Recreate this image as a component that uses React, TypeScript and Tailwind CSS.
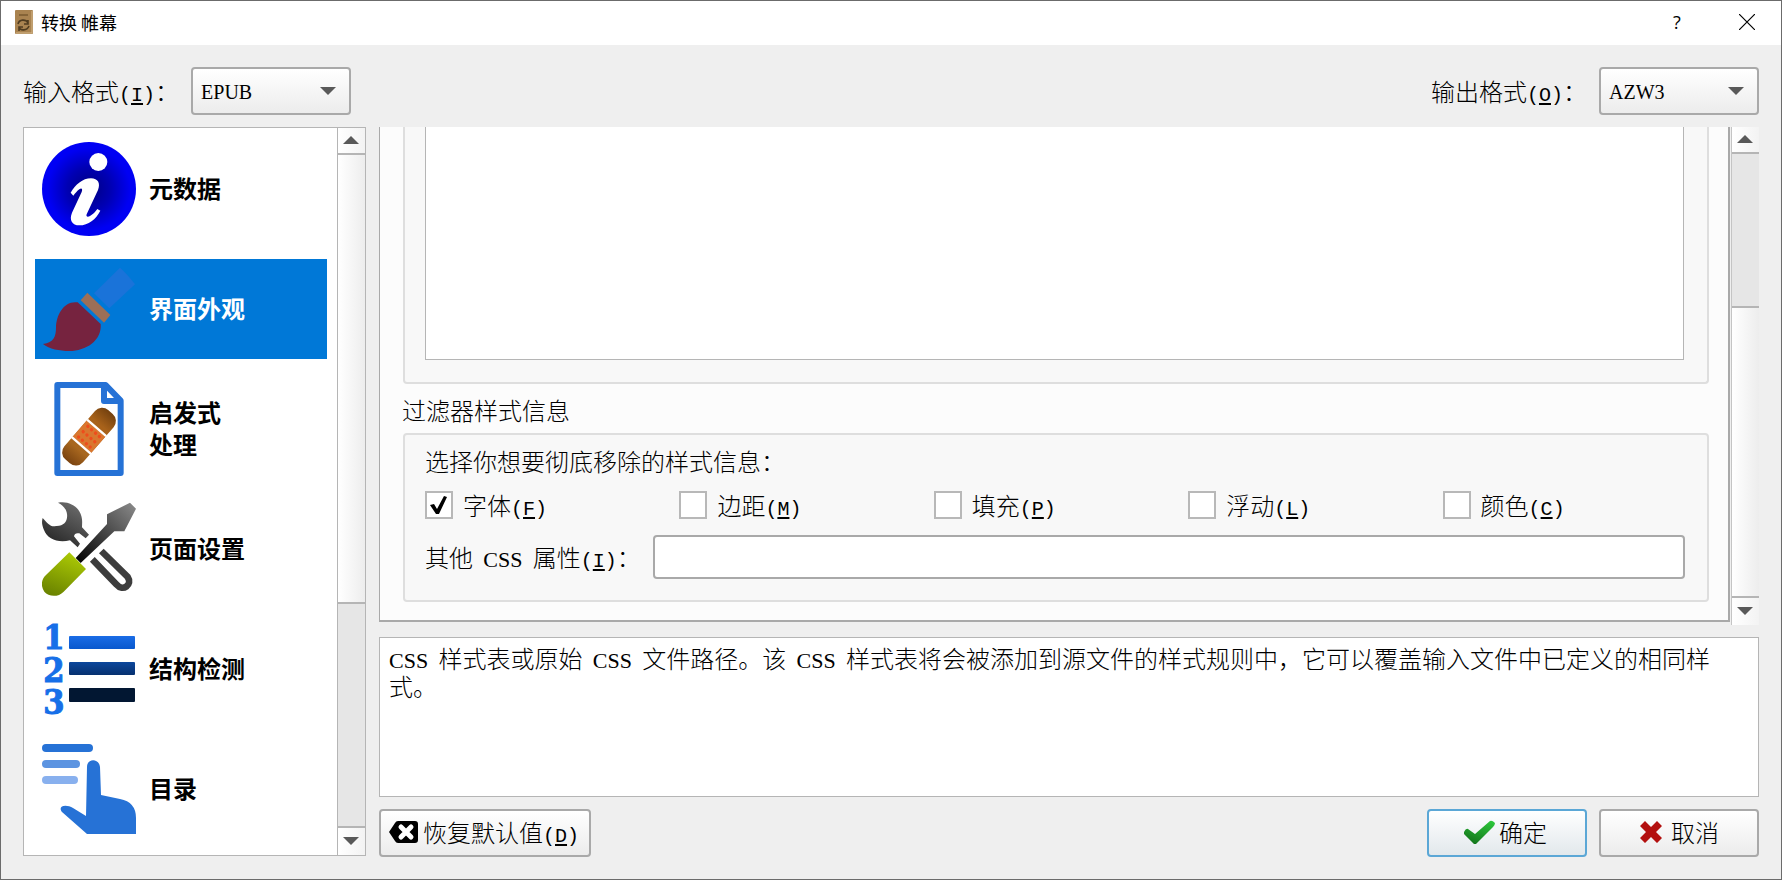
import { useState } from 'react'
import type { ReactNode } from 'react'
import { clsx } from 'clsx'

interface Section {
  id: string
  lines: string[]
  icon: ReactNode
}

interface FilterOption {
  id: string
  label: string
  mnemonic: string
}

const FILTERS: FilterOption[] = [
  { id: 'fonts',   label: '字体', mnemonic: 'F' },
  { id: 'margins', label: '边距', mnemonic: 'M' },
  { id: 'padding', label: '填充', mnemonic: 'P' },
  { id: 'floats',  label: '浮动', mnemonic: 'L' },
  { id: 'colors',  label: '颜色', mnemonic: 'C' },
]

/* ---------- icons ---------- */

function InfoIcon() {
  return (
    <svg viewBox="0 0 282 282" className="size-[94px] shrink-0">
      <defs>
        <radialGradient id="info-bg" cx="0.5" cy="0.5" r="0.52">
          <stop offset="0" stopColor="#000080" />
          <stop offset="0.45" stopColor="#0000b4" />
          <stop offset="0.85" stopColor="#0000f4" />
        </radialGradient>
      </defs>
      <circle cx="141" cy="141" r="141" fill="url(#info-bg)" />
      <circle cx="169" cy="60" r="27" fill="#fff" />
      <path
        d="M86 152C100 128 122 109 147 109C168 109 176 124 168 144L134 217C131 225 138 226 144 222C153 217 160 210 166 201L175 206C162 232 139 250 112 250C90 250 81 234 90 212L119 150C123 140 118 137 112 142C105 147 100 154 94 161Z"
        fill="#fff"
      />
    </svg>
  )
}

function BrushIcon() {
  return (
    <svg viewBox="0 0 282 282" className="size-[94px] shrink-0">
      <path d="M234 17Q256 36 279 67L202 139L156 94Z" fill="#1a73d9" />
      <path d="M136 92L205 159L186 182L116 115Z" fill="#9c6f57" />
      <path
        d="M107 121Q140 152 176 186C180 236 132 267 82 267C52 267 22 261 3 246C36 242 42 224 42 196C43 158 66 115 107 121Z"
        fill="#76233f"
      />
    </svg>
  )
}

function HeuristicIcon() {
  return (
    <svg viewBox="0 0 282 282" className="size-[94px] shrink-0">
      <defs>
        <linearGradient id="plaster" x1="0" x2="1">
          <stop offset="0" stopColor="#7a4310" />
          <stop offset="0.25" stopColor="#a8671f" />
          <stop offset="0.75" stopColor="#a8621a" />
          <stop offset="1" stopColor="#74410f" />
        </linearGradient>
      </defs>
      <path
        d="M46 9H191L236 56V273H46Z M186 12V57H234"
        fill="none"
        stroke="#2672d6"
        strokeWidth="18"
        strokeLinejoin="round"
      />
      <g transform="translate(141 164) rotate(-49)">
        <rect x="-98" y="-37" width="196" height="74" rx="28" fill="url(#plaster)" />
        <rect x="-35" y="-37" width="70" height="74" fill="#d9772f" />
        <path d="M-35 -38V38M35 -38V38" stroke="#fff" strokeWidth="7" />
        {[-21, 0, 21].map((x) =>
          [-23, -8, 8, 23].map((y) => <circle key={`${x}${y}`} cx={x} cy={y} r="5" fill="#ee4d1c" />)
        )}
      </g>
    </svg>
  )
}

function ToolsIcon() {
  return (
    <svg viewBox="0 0 282 282" className="size-[94px] shrink-0">
      <defs>
        <linearGradient id="wrench" x1="0" y1="1" x2="0.6" y2="0">
          <stop offset="0" stopColor="#1c1c1c" />
          <stop offset="1" stopColor="#686868" />
        </linearGradient>
        <linearGradient id="blade" x1="0" y1="1" x2="1" y2="0">
          <stop offset="0" stopColor="#000" />
          <stop offset="1" stopColor="#8c8c8c" />
        </linearGradient>
        <linearGradient id="grip" x1="0.7" y1="0" x2="0.3" y2="1">
          <stop offset="0" stopColor="#adcb05" />
          <stop offset="1" stopColor="#6b8400" />
        </linearGradient>
      </defs>
      <path
        d="M48 2C80 -5 111 14 118 42C122 56 120 66 120 76L141 98L131 109L112 94Q98 91 96 103L114 125L107 136L84 115C48 124 16 111 6 84C-1 68 -1 58 2 48C15 63 27 77 42 72C66 73 78 57 75 36C73 20 61 8 48 2Z"
        fill="url(#wrench)"
      />
      <path d="M151 172L224 248C242 270 273 248 257 225L178 147" fill="none" stroke="#3d3d3d" strokeWidth="20" />
      <path d="M264 2L282 20L247 88H217L116 183L101 168L195 66V37Z" fill="url(#blade)" />
      <path d="M82 151L132 201L65 269C48 287 19 284 7 269C-5 252 -2 232 12 219Z" fill="url(#grip)" />
    </svg>
  )
}

function StructureIcon() {
  return (
    <svg viewBox="0 0 94 94" className="size-[94px] shrink-0 overflow-visible">
      <defs>
        <linearGradient id="bar-top" x2="0" y2="1">
          <stop offset="0" stopColor="#1a6ce6" />
          <stop offset="1" stopColor="#0858cd" />
        </linearGradient>
        <linearGradient id="bar-mid" x2="0" y2="1">
          <stop offset="0" stopColor="#0c479c" />
          <stop offset="1" stopColor="#06306f" />
        </linearGradient>
      </defs>
      <g
        className="font-['DejaVu_Serif_Condensed','DejaVu_Serif',serif] text-[34px] font-bold"
        fill="#166fe8"
        stroke="#166fe8"
        strokeWidth="1"
        textAnchor="middle"
      >
        <text x="12" y="27">1</text>
        <text x="12" y="60">2</text>
        <text x="12" y="92">3</text>
      </g>
      <rect x="27" y="14" width="66" height="13" rx="1" fill="url(#bar-top)" />
      <rect x="27" y="40" width="66" height="13" rx="1" fill="url(#bar-mid)" />
      <rect x="27" y="66" width="66" height="14" rx="1" fill="#021732" />
    </svg>
  )
}

function TocIcon() {
  return (
    <svg viewBox="0 0 94 94" className="size-[94px] shrink-0">
      <rect y="2" width="51" height="8" rx="4" fill="#2672d6" />
      <rect y="18" width="38" height="8" rx="4" fill="#5c94e1" />
      <rect y="34" width="36" height="8" rx="4" fill="#88b0ee" />
      <path
        d="M45 25C45 16 57 16 58 25L59 53L78 57Q94 60 94 76V92H45L20 70C15 63 25 62 31 66L44 74Z"
        fill="#2672d6"
      />
    </svg>
  )
}

function BookIcon() {
  return (
    <svg viewBox="0 0 18 24" className="h-6 w-[18px]">
      <rect width="18" height="24" rx="1" fill="#a98350" />
      <path d="M17 1V23H1" fill="none" stroke="#d6b98d" strokeWidth="1" />
      <path d="M4 5H13" stroke="#60451f" strokeWidth="1" />
      <path
        d="M3 14C4 9 11 9 13 13M13 10V14H9M14 16C12 21 5 21 4 17M4 21V17H8"
        fill="none"
        stroke="#4f3b1f"
        strokeWidth="1.6"
      />
    </svg>
  )
}

function ClearIcon() {
  return (
    <svg viewBox="0 0 30 24" className="h-6 w-[30px]">
      <path d="M9 1H26Q29 1 29 4V20Q29 23 26 23H9Q7 23 6 21L0 12L6 3Q7 1 9 1Z" fill="#000" />
      <path d="M12 7L22 17M22 7L12 17" stroke="#fff" strokeWidth="5" strokeLinecap="round" />
    </svg>
  )
}

function OkIcon() {
  return (
    <svg viewBox="0 0 32 24" className="h-6 w-8">
      <defs>
        <linearGradient id="ok" x1="0.3" y1="1" x2="0.8" y2="0">
          <stop offset="0" stopColor="#13751b" />
          <stop offset="1" stopColor="#2dc53b" />
        </linearGradient>
      </defs>
      <path d="M1 12Q3 8 5 9L12 14L27 1Q29 0 32 3Q32 5 30 7L13 24H11L1 14Z" fill="url(#ok)" />
    </svg>
  )
}

function CancelIcon() {
  return (
    <svg viewBox="0 0 24 24" className="size-6">
      <path d="M6 1L12 7L18 1L23 6L17 12L23 18L18 23L12 17L6 23L1 18L7 12L1 6Z" fill="#b3100f" />
    </svg>
  )
}

function Triangle({ up }: { up?: boolean }) {
  return (
    <svg viewBox="0 0 16 8" className="h-2 w-4">
      <path d={up ? 'M0 8H16L8 0Z' : 'M0 0H16L8 8Z'} fill="#595959" />
    </svg>
  )
}

/* ---------- small parts ---------- */

function Mnemonic({ letter }: { letter: string }) {
  return (
    <span className="font-['Liberation_Mono',monospace] text-xl leading-4">
      (<span className="underline decoration-2 underline-offset-2">{letter}</span>)
    </span>
  )
}

function Css() {
  return <span className="mx-[5px] font-['Liberation_Serif',serif] text-[22px] leading-4 first:ml-0">CSS</span>
}

function FormatSelect({ id, value }: { id: string; value: string }) {
  return (
    <div className="relative">
      <select
        id={id}
        defaultValue={value}
        className="h-12 w-40 appearance-none rounded border-2 border-[#a9a9a9] bg-linear-to-b from-white to-[#ececec] pt-0.5 pl-2 font-['Liberation_Serif',serif] text-xl"
      >
        <option>{value}</option>
      </select>
      <span className="pointer-events-none absolute inset-y-0 right-[15px] flex items-center">
        <Triangle />
      </span>
    </div>
  )
}

function ScrollButton({ up, label }: { up?: boolean; label: string }) {
  return (
    <button
      aria-label={label}
      className={clsx(
        'flex shrink-0 items-center justify-center bg-linear-to-r from-white to-[#f3f3f3] pr-0.5 pb-0.5',
        up ? 'h-[27px] border-b-2 border-[#b5b5b5]' : 'h-[29px] border-t-2 border-[#b5b5b5]'
      )}
    >
      <Triangle up={up} />
    </button>
  )
}

const SECTIONS: Section[] = [
  { id: 'metadata',   lines: ['元数据'],         icon: <InfoIcon /> },
  { id: 'look',       lines: ['界面外观'],       icon: <BrushIcon /> },
  { id: 'heuristics', lines: ['启发式', '处理'], icon: <HeuristicIcon /> },
  { id: 'page',       lines: ['页面设置'],       icon: <ToolsIcon /> },
  { id: 'structure',  lines: ['结构检测'],       icon: <StructureIcon /> },
  { id: 'toc',        lines: ['目录'],           icon: <TocIcon /> },
]

/* ---------- panels ---------- */

function TitleBar() {
  return (
    <header className="flex h-11 shrink-0 items-center bg-white pb-0.5 pl-[14px]">
      <BookIcon />
      <h1 className="ml-2 flex-1 text-lg leading-6">转换 帷幕</h1>
      <button aria-label="帮助" className="mr-[52px] w-5 text-center font-['Open_Sans',sans-serif] text-lg">?</button>
      <button aria-label="关闭" className="mr-[26px]">
        <svg viewBox="0 0 16 16" className="size-4">
          <path d="M0 0L16 16M16 0L0 16" stroke="#000" strokeWidth="1.2" />
        </svg>
      </button>
    </header>
  )
}

function Sidebar() {
  const [active, setActive] = useState('look')

  return (
    <aside className="mb-px flex w-[343px] shrink-0 border border-[#b5b5b5] bg-white">
      <nav className="flex flex-1 flex-col gap-5 pt-[11px] pr-2.5 pl-[11px]">
        {SECTIONS.map((section) => (
          <button
            key={section.id}
            onClick={() => setActive(section.id)}
            className={clsx(
              'flex h-[100px] items-center gap-[13px] pl-[7px] text-left text-2xl leading-8 font-bold',
              active === section.id ? 'bg-[#0078d7] text-white' : 'text-black'
            )}
          >
            {section.icon}
            <span className="pb-0.5">
              {section.lines.map((line) => (
                <span key={line} className="block">{line}</span>
              ))}
            </span>
          </button>
        ))}
      </nav>
      <div className="flex w-7 flex-col border-l border-[#b5b5b5]">
        <ScrollButton up label="向上滚动" />
        <div className="flex-1 bg-linear-to-r from-white to-[#ededed]" />
        <div className="h-56 border-t-2 border-[#b5b5b5] bg-[#e6e6e6]" />
        <ScrollButton label="向下滚动" />
      </div>
    </aside>
  )
}

function StylingPane() {
  const [checked, setChecked] = useState<Record<string, boolean>>({ fonts: true })

  const toggle = (id: string) => setChecked((prev) => ({ ...prev, [id]: !prev[id] }))

  return (
    <div className="flex flex-1">
      <div className="mb-[3px] flex flex-1 flex-col border-r-2 border-b-2 border-l border-[#a9a9a9] bg-[#fcfcfc] pr-[19px] pb-[18px] pl-[23px]">
        {/* Extra CSS, scrolled so that only its lower part shows */}
        <div className="flex flex-1 rounded-b border-x-2 border-b-2 border-[#dedede] bg-[#f8f8f8] pr-[23px] pb-[22px] pl-5">
          <textarea
            aria-label="额外 CSS"
            className="flex-1 resize-none border-x border-b border-[#b5b5b5] bg-white outline-none"
          />
        </div>

        <h2 className="-ml-px pt-[14px] pb-[11px] text-2xl leading-6 font-light">过滤器样式信息</h2>

        <div className="flex flex-col gap-4 rounded border-2 border-[#dedede] bg-[#f8f8f8] pt-3 pr-[22px] pb-[21px] pl-5">
          <p className="text-2xl leading-7 font-light">选择你想要彻底移除的样式信息：</p>

          <div className="grid grid-cols-5 gap-3">
            {FILTERS.map((filter) => (
              <label key={filter.id} className="relative flex items-center gap-2.5 text-2xl leading-7 font-light">
                <input
                  type="checkbox"
                  checked={!!checked[filter.id]}
                  onChange={() => toggle(filter.id)}
                  className="size-7 appearance-none border-2 border-[#b8b8b8] bg-white"
                />
                {checked[filter.id] && (
                  <svg viewBox="0 0 28 28" className="pointer-events-none absolute left-0 size-7">
                    <path d="M5 14L9 13L12 18L19 5L22 6L14 23H11Z" fill="#000" />
                  </svg>
                )}
                <span>{filter.label}<Mnemonic letter={filter.mnemonic} /></span>
              </label>
            ))}
          </div>

          <div className="flex items-center gap-3">
            <label htmlFor="other-css" className="text-2xl leading-7 font-light">
              <span>其他 </span><Css /> 属性<Mnemonic letter="I" />：
            </label>
            <input
              id="other-css"
              className="h-11 min-w-0 flex-1 rounded border-2 border-[#a9a9a9] bg-white px-2 text-2xl outline-none"
            />
          </div>
        </div>
      </div>

      <div className="ml-px flex w-7 flex-col border-l border-[#c4c4c4]">
        <ScrollButton up label="向上滚动" />
        <div className="h-[154px] border-b-2 border-[#b5b5b5] bg-[#e6e6e6]" />
        <div className="flex-1 bg-linear-to-r from-white to-[#ededed]" />
        <ScrollButton label="向下滚动" />
      </div>
    </div>
  )
}

export default function App() {
  return (
    <div className="flex min-h-screen flex-col border border-[#6b6b6b] bg-[#efefef] font-['Noto_Sans_CJK_SC',sans-serif] text-black">
      <TitleBar />

      <div className="flex items-center justify-between px-[22px] pt-[22px] pb-3">
        <div className="flex items-center gap-3">
          <label htmlFor="input-format" className="text-2xl leading-7 font-light">输入格式<Mnemonic letter="I" />：</label>
          <FormatSelect id="input-format" value="EPUB" />
        </div>
        <div className="flex items-center gap-3">
          <label htmlFor="output-format" className="text-2xl leading-7 font-light">输出格式<Mnemonic letter="O" />：</label>
          <FormatSelect id="output-format" value="AZW3" />
        </div>
      </div>

      <main className="flex flex-1 gap-[13px] px-[22px] pb-[22px]">
        <Sidebar />

        <div className="flex min-w-0 flex-1 flex-col gap-3">
          <StylingPane />

          <div className="h-40 border border-[#b5b5b5] bg-white px-[9px] py-1.5 text-2xl leading-7 font-light">
            <Css /> 样式表或原始 <Css /> 文件路径。该 <Css /> 样式表将会被添加到源文件的样式规则中，它可以覆盖输入文件中已定义的相同样式。
          </div>

          <div className="flex gap-3 text-2xl leading-7 font-light">
            <button className="flex h-12 w-[212px] items-center gap-1 rounded border-2 border-[#a9a9a9] bg-linear-to-b from-white to-[#ececec] pb-0.5 pl-2 whitespace-nowrap">
              <ClearIcon />
              <span>恢复默认值<Mnemonic letter="D" /></span>
            </button>
            <button className="ml-auto flex h-12 w-40 items-center justify-center gap-1 rounded border-2 border-[#5ba7d6] bg-linear-to-b from-white to-[#e2e8ec] pr-1 pb-0.5">
              <OkIcon />
              确定
            </button>
            <button className="flex h-12 w-40 items-center justify-center gap-2 rounded border-2 border-[#a9a9a9] bg-linear-to-b from-white to-[#ececec] pb-0.5">
              <CancelIcon />
              取消
            </button>
          </div>
        </div>
      </main>
    </div>
  )
}
